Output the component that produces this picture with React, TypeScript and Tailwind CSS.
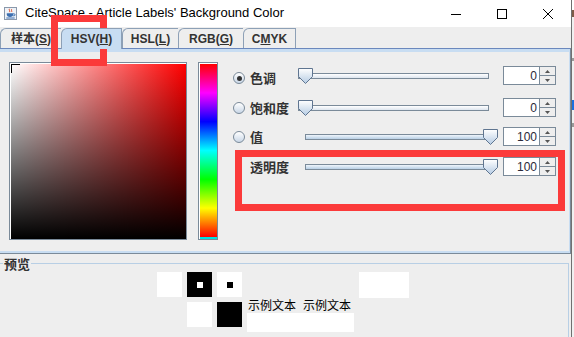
import { FC } from 'react';

const cjk = "font-['Noto_Sans_CJK_SC',sans-serif]";
const tabFont = "font-['Liberation_Sans','Noto_Sans_CJK_SC',sans-serif]";

const JavaIcon: FC = () => (
  <svg width="13" height="13" viewBox="0 0 13 13">
    <rect x="0.5" y="0.5" width="12" height="12" fill="#eef2f7" stroke="#8a98ab" />
    <path d="M5.5 1.8c-1 1.4 1 1.9 0 3.3M7.6 2.3c-0.8 1.1 0.8 1.5 0 2.6" stroke="#e0461f" fill="none" />
    <path d="M2.8 6.2h6.4v1.4c0 1.5-1.2 2.4-3.2 2.4S2.8 9.1 2.8 7.6Z" fill="#3c6fb0" />
    <path d="M9.2 6.8h0.8a1 1 0 0 1 0 2h-0.8" stroke="#3c6fb0" fill="none" />
    <path d="M2.3 11h8.4" stroke="#3c6fb0" />
  </svg>
);

const WinButtons: FC = () => (
  <div className="ml-auto flex h-full">
    <div className="w-[46px] h-full flex items-center justify-center">
      <svg width="10" height="10" viewBox="0 0 10 10">
        <path d="M0 5.5h10" stroke="#000" />
      </svg>
    </div>
    <div className="w-[46px] h-full flex items-center justify-center">
      <svg width="10" height="10" viewBox="0 0 10 10">
        <rect x="0.5" y="0.5" width="9" height="9" fill="none" stroke="#000" />
      </svg>
    </div>
    <div className="w-[46px] h-full flex items-center justify-center">
      <svg width="10" height="10" viewBox="0 0 10 10">
        <path d="M0 0L10 10M10 0L0 10" stroke="#000" />
      </svg>
    </div>
  </div>
);

type TabProps = { width: string; selected?: boolean; last?: boolean; children: React.ReactNode };

const Tab: FC<TabProps> = ({ width, selected, last, children }) => (
  <div
    className={`${width} flex items-center justify-center border-l border-t border-[#8da0b6] rounded-tl-[6px] ${tabFont} text-[12px] font-bold text-[#333] ${
      selected ? 'relative z-10 h-[21px] -mb-px pb-px bg-[#c8ddf2] border-r' : 'h-[20px] bg-[#eeeeee]'
    } ${last ? 'border-r' : ''}`}
  >
    {children}
  </div>
);

const Thumb: FC = () => (
  <svg width="15" height="16" viewBox="0 0 15 16">
    <defs>
      <linearGradient id="thumbFill" x1="0" y1="0" x2="0" y2="1">
        <stop offset="0" stopColor="#ffffff" />
        <stop offset="1" stopColor="#b5cbe3" />
      </linearGradient>
    </defs>
    <path d="M0.5 0.5H14.5V8.5L7.5 15.5L0.5 8.5Z" fill="url(#thumbFill)" stroke="#5f7590" />
  </svg>
);

const Slider: FC<{ atMax?: boolean; wide?: boolean }> = ({ atMax, wide }) => (
  <div className={`relative h-[19px] ${wide ? 'w-[200px]' : 'w-[193px]'}`}>
    <div
      className={`absolute left-0 right-[9px] top-[7px] h-[6px] border border-[#7a8a99] ${
        atMax
          ? 'bg-[linear-gradient(to_bottom,#eef4fb,#b8cfe5)]'
          : 'bg-[linear-gradient(to_bottom,#ffffff,#dde5ee)]'
      }`}
    />
    <div className={`absolute top-[2px] ${atMax ? 'right-0' : 'left-0'}`}>
      <Thumb />
    </div>
  </div>
);

const Radio: FC<{ checked?: boolean }> = ({ checked }) => (
  <div className="w-[12px] h-[12px] rounded-full border border-[#7a8a99] bg-[linear-gradient(to_bottom,#ffffff,#c9d7e7)] flex items-center justify-center">
    {checked && <div className="w-[5px] h-[5px] rounded-full bg-[#333333]" />}
  </div>
);

const Spinner: FC<{ value: number }> = ({ value }) => (
  <div className="ml-[5px] flex h-[19px] w-[53px]">
    <div className="w-[37px] h-full bg-white border border-[#7a8a99] flex items-center justify-end pr-[2px] font-['Liberation_Sans',sans-serif] text-[12px] text-[#2a2a3a]">
      {value}
    </div>
    <div className="w-[16px] h-full flex flex-col">
      <div className="h-[10px] border border-l-0 border-[#7a8a99] bg-[#eeeeee] flex items-center justify-center">
        <svg width="5" height="3" viewBox="0 0 5 3">
          <path d="M2.5 0L5 3H0Z" fill="#555" />
        </svg>
      </div>
      <div className="h-[9px] border border-l-0 border-t-0 border-[#7a8a99] bg-[#eeeeee] flex items-center justify-center">
        <svg width="5" height="3" viewBox="0 0 5 3">
          <path d="M0 0H5L2.5 3Z" fill="#555" />
        </svg>
      </div>
    </div>
  </div>
);

type RowProps = {
  label: string;
  radio?: boolean;
  checked?: boolean;
  value: number;
  atMax?: boolean;
  wide?: boolean;
  low?: boolean;
};

const Row: FC<RowProps> = ({ label, radio, checked, value, atMax, wide, low }) => (
  <div className="flex items-center h-[19px]">
    <div className={`flex items-center ${low ? 'self-end' : ''}`}>
      <div className="w-[12px] flex items-center">{radio && <Radio checked={checked} />}</div>
      <div
        className={`ml-[5px] ${wide ? 'w-[48px]' : 'w-[55px]'} ${cjk} text-[13px] font-bold leading-[14px] text-[#333]`}
      >
        {label}
      </div>
    </div>
    <Slider atMax={atMax} wide={wide} />
    <Spinner value={value} />
  </div>
);

export default function App() {
  return (
    <div className="relative w-[574px] h-[337px] overflow-hidden flex bg-[#eeeeee]">
      <div className="w-[571px] h-full flex flex-col">
        {/* title bar */}
        <div className="h-[27px] bg-white flex items-center">
          <div className="ml-[4px] -mt-[1px]">
            <JavaIcon />
          </div>
          <div className="ml-[8px] -mt-[2px] font-['Liberation_Sans',sans-serif] text-[13px] text-black">
            CiteSpace - Article Labels' Background Color
          </div>
          <WinButtons />
        </div>

        {/* tabs */}
        <div className="h-[21px] flex items-end">
          <Tab width="w-[61px]">
            样本(<span className="underline">S</span>)
          </Tab>
          <Tab width="w-[61px]" selected>
            HSV(<span className="underline">H</span>)
          </Tab>
          <Tab width="w-[56px]">
            HSL(<span className="underline">L</span>)
          </Tab>
          <Tab width="w-[65px]">
            RGB(<span className="underline">G</span>)
          </Tab>
          <Tab width="w-[53px]" last>
            C<span className="underline">M</span>YK
          </Tab>
        </div>

        {/* tab content */}
        <div className="h-[206px] border-t border-r border-b border-[#7a8a99] border-t-[#6b88bd]">
          <div className="h-full border-t-[3px] border-r border-b-2 border-[#c8ddf2] pt-[10px] pl-[9px] flex items-start">
            <div className="relative w-[178px] h-[178px] border border-[#7a8a99] bg-white pl-px pt-px">
              <div className="w-full h-full bg-[linear-gradient(to_bottom,transparent,#000),linear-gradient(to_right,#fff,#f00)]" />
              <div className="absolute left-px top-px w-[9px] h-[9px] border-l border-t border-black" />
            </div>
            <div className="ml-[11px] w-[20px] h-[178px] border border-[#7a8a99] bg-white pl-px pt-px flex flex-col">
              <div className="flex-1 bg-[linear-gradient(to_bottom,#f00_0%,#f0f_16.7%,#00f_33.3%,#0ff_50%,#0f0_66.7%,#ff0_83.3%,#f00_100%)]" />
              <div className="h-[2px] bg-[#00e0e0]" />
            </div>
            <div className="ml-[15px] pt-[4px] flex flex-col">
              <Row label="色调" radio checked value={0} wide low />
              <div className="mt-[13px]">
                <Row label="饱和度" radio value={0} wide />
              </div>
              <div className="mt-[10px]">
                <Row label="值" radio value={100} atMax />
              </div>
              <div className="mt-[11px]">
                <Row label="透明度" value={100} atMax />
              </div>
            </div>
          </div>
        </div>

        {/* preview */}
        <div className="flex-1 flex flex-col pt-[3px]">
          <div className="h-[13px] flex items-center">
            <div className="w-[3px] h-px bg-[#b8cfe5]" />
            <div className={`px-px ${cjk} text-[13px] font-bold leading-[13px] text-[#333]`}>预览</div>
            <div className="flex-1 mr-[2px] h-px bg-[#b8cfe5]" />
          </div>
          <div className="flex-1 mr-[2px] -mt-[6px] border-r border-[#b8cfe5] pt-[8px] pl-[157px] flex items-start">
            <div className="w-[25px] h-[25px] bg-white" />
            <div className="ml-[5px] flex flex-col">
              <div className="w-[25px] h-[25px] bg-black flex items-center justify-center">
                <div className="w-[6px] h-[6px] bg-white" />
              </div>
              <div className="mt-[5px] w-[25px] h-[25px] bg-white" />
            </div>
            <div className="ml-[5px] flex flex-col">
              <div className="w-[25px] h-[25px] bg-white flex items-center justify-center">
                <div className="w-[6px] h-[6px] bg-black" />
              </div>
              <div className="mt-[5px] w-[25px] h-[25px] bg-black" />
            </div>
            <div className="ml-[5px] mt-[25px] flex flex-col">
              <div className={`pl-px h-[15px] flex items-center gap-[7px] ${cjk} text-[12px] leading-[12px] text-black`}>
                <span>示例文本</span>
                <span>示例文本</span>
              </div>
              <div className="mt-[1px] w-[107px] h-[19px] bg-white" />
            </div>
            <div className="ml-[5px] w-[50px] h-[26px] bg-white" />
          </div>
        </div>
      </div>

      {/* window frame + background behind */}
      <div className="w-px h-full bg-[#707070]" />
      <div className="w-[2px] h-full flex flex-col bg-[#f0f0f0]">
        <div className="h-[10px] bg-white" />
        <div className="h-[7px] bg-[#7d5a46]" />
        <div className="h-[41px]" />
        <div className="h-[3px] bg-[#9a9a9a]" />
        <div className="h-[39px]" />
        <div className="h-[10px] bg-[#1a6fe0]" />
        <div className="h-[13px]" />
        <div className="h-[4px] bg-[#9a9a9a]" />
      </div>

      {/* red annotation boxes */}
      <div className="absolute left-[51px] top-[15px] w-[56px] h-[51px] border-[7px] border-[#fb3a3a]" />
      <div className="absolute left-[235px] top-[150px] w-[330px] h-[61px] border-[7px] border-[#fb3a3a]" />
    </div>
  );
}
